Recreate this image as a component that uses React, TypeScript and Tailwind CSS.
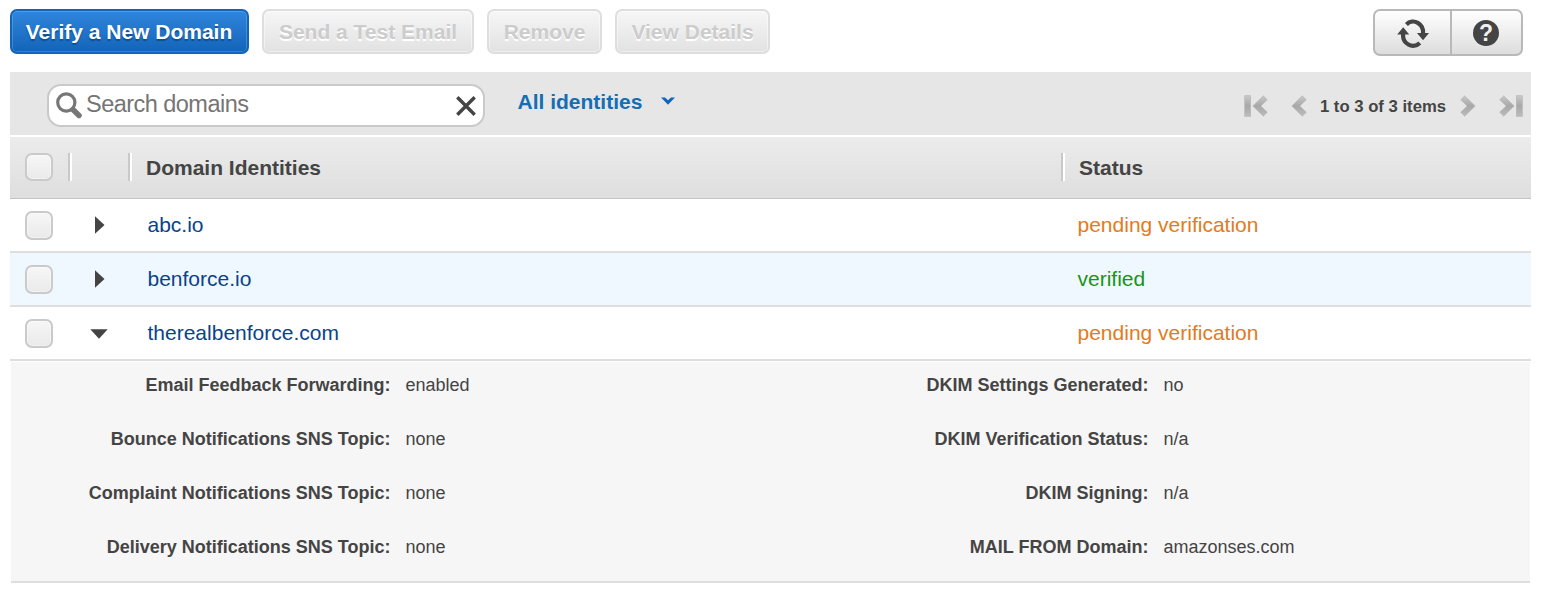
import React from "react";

const disabledBtn =
  "flex h-[45px] items-center justify-center rounded-[7px] border-2 border-[#dedede] bg-linear-to-b from-[#f6f6f6] to-[#e2e2e2] pt-px text-[21px] font-bold text-[#cccccc] [text-shadow:0_2px_0_#fff] shadow-[inset_0_0_0_1px_rgba(255,255,255,0.45)]";

function Checkbox({ header = false }: { header?: boolean }) {
  return (
    <span
      className={`ml-[15px] block w-7 shrink-0 rounded-[7px] border-2 border-[#cacaca] bg-linear-to-b from-[#f6f6f6] to-[#eaeaea] shadow-[inset_0_0_0_1px_rgba(255,255,255,0.4)] ${header ? "mb-[2px] h-7" : "h-[29px]"}`}
    />
  );
}

function Divider() {
  return <span className="mb-[2px] block h-7 w-1 shrink-0 border-l-2 border-[#c9c9c9] bg-white" />;
}

function Chevron({ flip = false, bar = false }: { flip?: boolean; bar?: boolean }) {
  return (
    <svg
      width={bar ? 24 : 16}
      height="22"
      viewBox={bar ? "0 0 24 22" : "8 0 16 22"}
      className={`block shrink-0 ${flip ? "-scale-x-100" : ""}`}
    >
      <defs>
        <linearGradient id="chev" x1="0" y1="0" x2="0" y2="1">
          <stop offset="0" stopColor="#c8c8c8" />
          <stop offset="0.5" stopColor="#a8a8a8" />
          <stop offset="1" stopColor="#bcbcbc" />
        </linearGradient>
      </defs>
      {bar && <rect x="0.7" y="0.7" width="6" height="20.6" fill="url(#chev)" stroke="#b5b5b5" strokeWidth="0.6" />}
      <path
        d="M19.3 0.8L8.8 11L19.3 21.2L23.3 17.3L16.8 11L23.3 4.7Z"
        fill="url(#chev)"
        stroke="#b5b5b5"
        strokeWidth="0.6"
      />
    </svg>
  );
}

function Row({ name, status, color, open, shaded }: { name: string; status: string; color: string; open?: boolean; shaded?: boolean }) {
  return (
    <div className={`flex h-[54px] items-center border-b-2 border-[#dedede] ${shaded ? "bg-[#f0f8ff]" : "bg-white"}`}>
      <Checkbox />
      <div className="ml-[37px] flex w-[17px] justify-center">
        {open ? (
          <svg width="18" height="10" viewBox="0 0 18 10" className="mt-[2px] shrink-0">
            <path d="M0.3 0.3H17.7L9 9.8Z" fill="#444" />
          </svg>
        ) : (
          <svg width="10" height="18" viewBox="0 0 10 18" className="ml-[2px] shrink-0">
            <path d="M0 0.3V17.7L9.5 9Z" fill="#444" />
          </svg>
        )}
      </div>
      <span className="ml-[40.5px] w-[930px] text-[21px] leading-6 text-[#0a4389]">{name}</span>
      <span className={`text-[21px] leading-6 ${color}`}>{status}</span>
    </div>
  );
}

function Details({ items, className }: { items: string[][]; className: string }) {
  return (
    <dl className={className}>
      {items.map(([k, v]) => (
        <div key={k} className="flex h-[54px] text-[18px] leading-[22px] text-[#444]">
          <dt className="flex-1 text-right font-bold whitespace-nowrap">{k}</dt>
          <dd className="ml-[15px] w-[150px]">{v}</dd>
        </div>
      ))}
    </dl>
  );
}

export default function App() {
  return (
    <div className="h-[600px] w-[1543px] overflow-hidden bg-white pt-[9px] pl-[10px] font-['Liberation_Sans',Arial,sans-serif] text-[#444]">
      <div className="flex h-[63px] w-[1513px] items-start">
        <button className="flex h-[45px] w-[239px] items-center justify-center rounded-[7px] border-2 border-[#1166bb] bg-linear-to-b from-[#2f86dd] to-[#1264b8] pt-px pr-px text-[21px] font-bold whitespace-nowrap text-white [text-shadow:0_2px_1px_#0f4f94] shadow-[inset_0_0_0_1px_rgba(255,255,255,0.18)]">
          Verify a New Domain
        </button>
        <button className={`ml-[13px] w-[212px] ${disabledBtn}`}>Send a Test Email</button>
        <button className={`ml-[13px] w-[115px] ${disabledBtn}`}>Remove</button>
        <button className={`ml-[13px] w-[155px] ${disabledBtn}`}>View Details</button>
        <div className="ml-auto flex h-[47px] w-[150px] rounded-[7px] border-2 border-[#b9b9b9] bg-linear-to-b from-white to-[#dddddd]">
          <button className="flex w-[77px] items-center justify-center border-r-2 border-[#b9b9b9]">
            <svg width="32" height="30" viewBox="0 0 32 30" className="block">
              <path d="M9.4 6.4A10 10.8 0 0 1 26 16" fill="none" stroke="#444" strokeWidth="4.2" />
              <path d="M22.8 25A10 10.8 0 0 1 6.2 15.4" fill="none" stroke="#444" strokeWidth="4.2" />
              <path d="M20 15H32L26 22.2Z" fill="#444" />
              <path d="M0.2 16.4H12.2L6.2 9.2Z" fill="#444" />
            </svg>
          </button>
          <button className="flex flex-1 items-center justify-center pt-px pr-px">
            <span className="flex size-[26px] items-center justify-center rounded-full bg-[#444] text-[23px] leading-none font-bold text-[#f0f0f0]">?</span>
          </button>
        </div>
      </div>

      <div className="w-[1521px]">
        <div className="flex h-[63px] bg-[#e6e6e6]">
          <div className="mt-3 ml-[37px] flex h-[43px] w-[438px] items-center rounded-[14px] border-2 border-[#c9c9c9] bg-white pl-[7px]">
            <svg width="26" height="27" viewBox="0 0 26 27" className="shrink-0">
              <circle cx="10.3" cy="10.5" r="8.6" fill="none" stroke="#777" strokeWidth="3.2" />
              <path d="M17 17.5L23 23.5" stroke="#777" strokeWidth="5.4" strokeLinecap="round" />
            </svg>
            <span className="ml-[4px] flex-1 pb-[3px] text-[23.5px] leading-7 tracking-[-0.53px] text-[#757575]">Search domains</span>
            <svg width="20" height="20" viewBox="0 0 20 20" className="mr-[7px] shrink-0">
              <path d="M1.3 1.3L18.7 18.7M18.7 1.3L1.3 18.7" stroke="#444" strokeWidth="3.4" />
            </svg>
          </div>
          <div className="mt-[18px] ml-[32.5px] flex h-6 items-center text-[21px] leading-6 font-bold text-[#146eb4]">
            All identities
            <svg width="14" height="9" viewBox="0 0 14 9" className="mb-[2px] ml-[19px]">
              <path d="M0 0.5H4L7 3.2L10 0.5H14L7 7.8Z" fill="#1166bb" />
            </svg>
          </div>
          <div className="mt-[23px] mr-[8px] ml-auto flex h-[22px] items-center text-[16.7px] font-bold">
            <Chevron bar />
            <span className="w-[23px]" />
            <Chevron />
            <span className="mr-[13.5px] ml-[12.5px] w-[127px] pt-px text-center whitespace-nowrap">1 to 3 of 3 items</span>
            <Chevron flip />
            <span className="w-[23px]" />
            <Chevron bar flip />
          </div>
        </div>

        <div className="mt-0.5 flex h-[62px] items-center border-b border-[#c4c4c4] bg-linear-to-b from-[#ececec] to-[#dedede] text-[21px] font-bold">
          <Checkbox header />
          <span className="w-[15px]" />
          <Divider />
          <span className="w-14" />
          <Divider />
          <span className="ml-[14px] w-[915px]">Domain Identities</span>
          <Divider />
          <span className="ml-[14px]">Status</span>
        </div>
        <Row name="abc.io" status="pending verification" color="text-[#e17b22]" />
        <Row name="benforce.io" status="verified" color="text-[#159615]" shaded />
        <Row name="therealbenforce.com" status="pending verification" color="text-[#e17b22]" open />
        <div className="mt-px ml-px flex h-[221px] w-[1519px] border-b-2 border-[#dedede] bg-[#f6f6f6] pt-3">
          <Details
            className="w-[544.5px]"
            items={[
              ["Email Feedback Forwarding:", "enabled"],
              ["Bounce Notifications SNS Topic:", "none"],
              ["Complaint Notifications SNS Topic:", "none"],
              ["Delivery Notifications SNS Topic:", "none"],
            ]}
          />
          <Details
            className="w-[758px]"
            items={[
              ["DKIM Settings Generated:", "no"],
              ["DKIM Verification Status:", "n/a"],
              ["DKIM Signing:", "n/a"],
              ["MAIL FROM Domain:", "amazonses.com"],
            ]}
          />
        </div>
      </div>
    </div>
  );
}
